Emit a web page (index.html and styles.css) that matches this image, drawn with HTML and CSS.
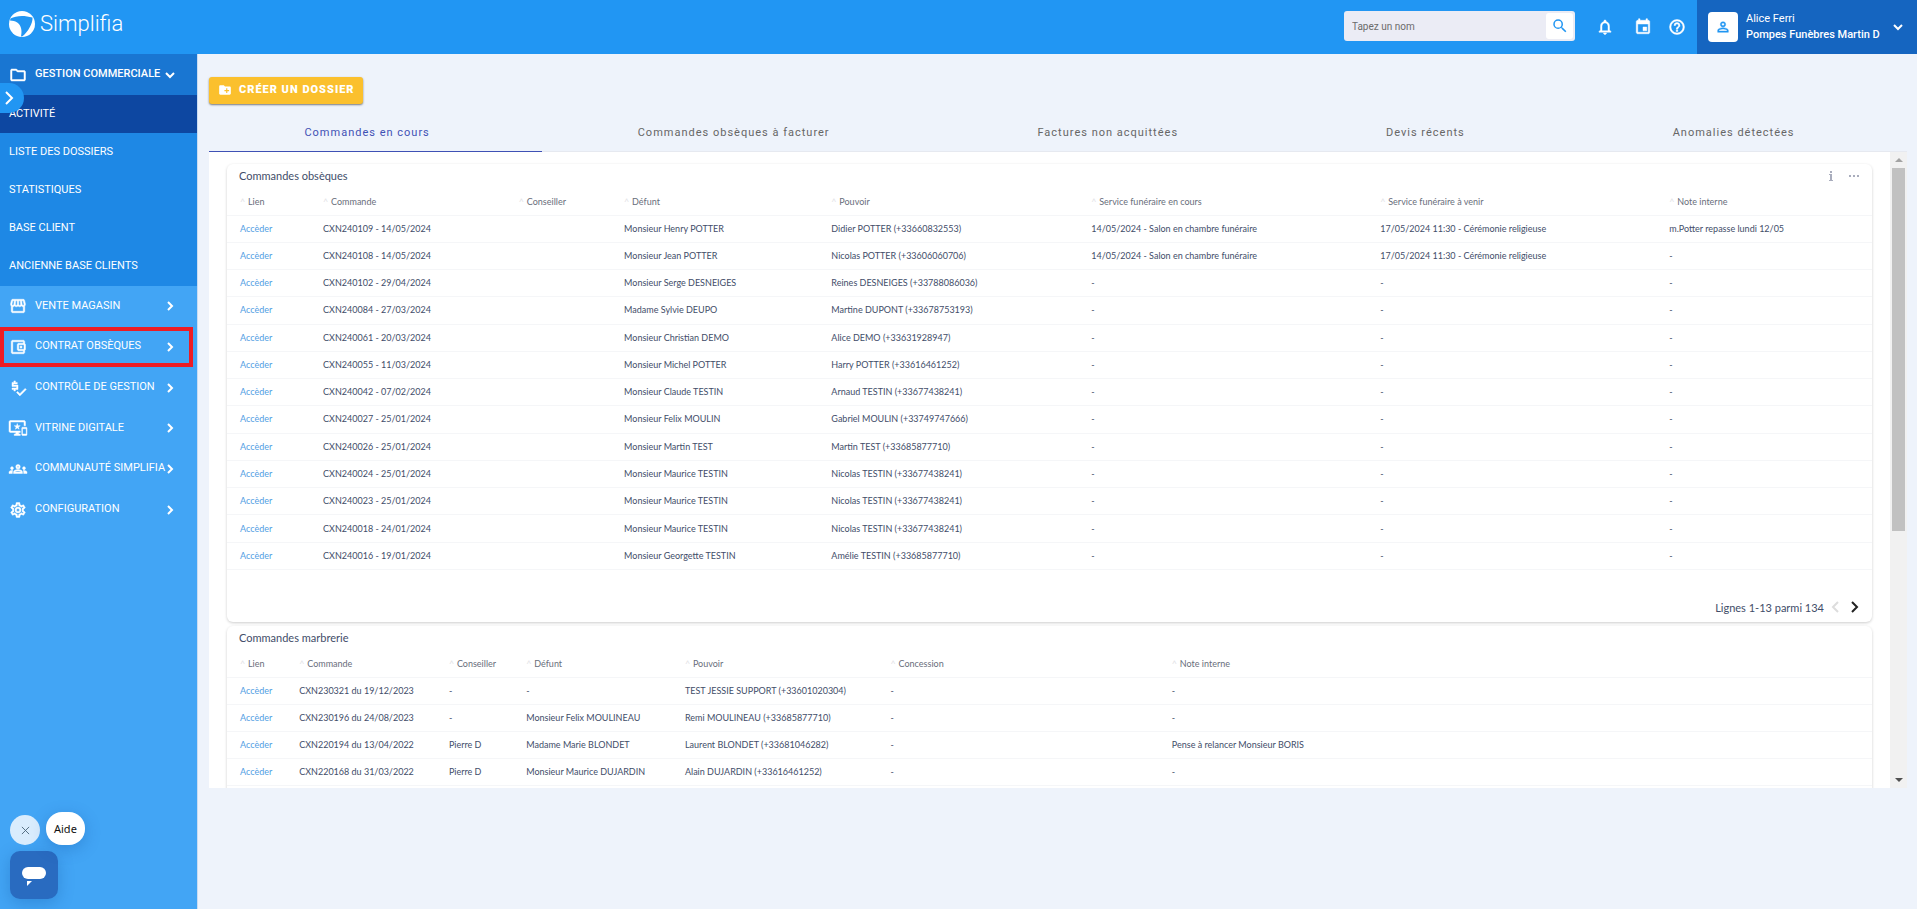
FILE: index.html
```html
<!DOCTYPE html>
<html lang="fr">
<head>
<meta charset="utf-8">
<title>Simplifia</title>
<link rel="stylesheet" href="styles.css">
</head>
<body>
<header class="topbar">
  <a class="brand" href="#">
    <svg class="brand-mark" viewBox="0 0 26 26" aria-hidden="true"><circle cx="13" cy="13" r="13" fill="#fff"/><path d="M1.500 7.500C7 4.500 15 4 23.500 6.500C24 12 19 21 13.500 25.200L12 25.500C13.500 19 12.500 10 1 9.500z" fill="#2196f3"/></svg>
    <span class="brand-name">Simplifia</span>
  </a>
  <form class="search">
    <input class="search-input" type="text" placeholder="Tapez un nom" aria-label="Tapez un nom">
    <button class="search-button" type="button" aria-label="Rechercher"><svg viewBox="0 0 24 24"><path d="M15.500 14h-.79l-.28-.27A6.471 6.471 0 0 0 16 9.500 6.500 6.500 0 1 0 9.500 16c1.610 0 3.090-.59 4.230-1.570l.27.28v.79l5 4.990L20.490 19zm-6 0a4.500 4.500 0 1 1 0-9 4.500 4.500 0 0 1 0 9z"/></svg></button>
  </form>
  <nav class="tools" aria-label="Outils">
    <button type="button" aria-label="Notifications"><svg viewBox="0 0 24 24"><path d="M12 22c1.100 0 2-.9 2-2h-4c0 1.100.9 2 2 2zm6-6v-5c0-3.070-1.630-5.640-4.500-6.320V4c0-.83-.67-1.500-1.500-1.500s-1.500.67-1.500 1.500v.68C7.640 5.360 6 7.920 6 11v5l-2 2v1h16v-1l-2-2zm-2 1H8v-6c0-2.480 1.510-4.500 4-4.500s4 2.020 4 4.500v6z"/></svg></button>
    <button type="button" aria-label="Calendrier"><svg viewBox="0 0 24 24"><path d="M17 12h-5v5h5v-5zM16 1v2H8V1H6v2H5c-1.110 0-1.990.9-1.990 2L3 19c0 1.100.89 2 2 2h14c1.100 0 2-.9 2-2V5c0-1.100-.9-2-2-2h-1V1h-2zm3 18H5V8h14v11z"/></svg></button>
    <button type="button" aria-label="Aide en ligne"><svg viewBox="0 0 24 24"><path d="M11 18h2v-2h-2v2zm1-16a10 10 0 1 0 0 20 10 10 0 0 0 0-20zm0 18a8 8 0 1 1 0-16 8 8 0 0 1 0 16zm0-14a4 4 0 0 0-4 4h2c0-1.100.9-2 2-2s2 .9 2 2c0 2-3 1.750-3 5h2c0-2.250 3-2.500 3-5a4 4 0 0 0-4-4z"/></svg></button>
  </nav>
  <button class="account" type="button">
    <span class="avatar"><svg viewBox="0 0 24 24"><path d="M12 5.900a2.100 2.100 0 1 1 0 4.200 2.100 2.100 0 0 1 0-4.200m0 9c2.970 0 6.100 1.460 6.100 2.100v1.100H5.900V17c0-.64 3.130-2.100 6.100-2.100M12 4a4 4 0 1 0 0 8 4 4 0 0 0 0-8zm0 9c-2.670 0-8 1.340-8 4v3h16v-3c0-2.660-5.330-4-8-4z"/></svg></span>
    <span class="account-text"><span>Alice Ferri</span><strong>Pompes Funèbres Martin D</strong></span>
    <svg class="chevron" viewBox="0 0 12 12"><path d="M2 4l4 4 4-4"/></svg>
  </button>
</header>

<div class="shell">
  <aside class="sidebar">
    <nav aria-label="Menu principal">
      <a class="group open" href="#"><svg class="icon" viewBox="0 0 24 24"><path d="M9.170 6l2 2H20v10H4V6h5.170M10 4H4c-1.100 0-1.990.9-1.990 2L2 18c0 1.100.9 2 2 2h16c1.100 0 2-.9 2-2V8c0-1.100-.9-2-2-2h-8l-2-2z"/></svg><span>GESTION COMMERCIALE</span><svg class="chevron" viewBox="0 0 12 12"><path d="M2 4l4 4 4-4"/></svg></a>
      <div class="submenu">
        <a class="current" href="#">ACTIVITÉ</a>
        <a href="#">LISTE DES DOSSIERS</a>
        <a href="#">STATISTIQUES</a>
        <a href="#">BASE CLIENT</a>
        <a href="#">ANCIENNE BASE CLIENTS</a>
      </div>
      <div class="groups">
        <a class="group" href="#"><svg class="icon" viewBox="0 0 24 24"><path d="M21.900 8.890l-1.050-4.370c-.22-.9-1-1.520-1.910-1.520H5.050c-.9 0-1.690.63-1.900 1.520L2.100 8.890c-.24 1.020-.02 2.060.62 2.880.08.11.19.19.28.29V19c0 1.100.9 2 2 2h14c1.100 0 2-.9 2-2v-6.940c.09-.09.2-.18.28-.28.64-.82.87-1.870.62-2.890zM18.910 4.990l1.050 4.370c.1.420.01.84-.25 1.170-.14.18-.44.47-.94.47-.61 0-1.140-.49-1.210-1.140L16.980 5l1.930-.01zM13 5h1.960l.54 4.520c.05.39-.07.78-.33 1.070-.22.26-.54.41-.95.410-.67 0-1.220-.59-1.220-1.310V5zM8.490 9.520L9.040 5H11v4.690c0 .72-.55 1.310-1.290 1.310-.34 0-.65-.15-.89-.41-.25-.29-.37-.68-.33-1.070zm-4.450-.16L5.050 5h1.970l-.58 4.860c-.08.65-.6 1.140-1.210 1.140-.49 0-.8-.29-.93-.47-.27-.32-.36-.75-.26-1.170zM5 19v-6.030c.08.010.15.030.23.030.87 0 1.660-.36 2.240-.95.6.6 1.400.95 2.310.95.87 0 1.650-.36 2.230-.93.590.57 1.390.93 2.290.93.84 0 1.640-.35 2.240-.95.58.59 1.370.95 2.240.95.08 0 .15-.02.23-.03V19H5z"/></svg><span>VENTE MAGASIN</span><svg class="chevron" viewBox="0 0 12 12"><path d="M4 2l4 4-4 4"/></svg></a>
        <a class="group marked" href="#"><svg class="icon" viewBox="0 0 24 24"><path d="M21 7.280V5c0-1.100-.9-2-2-2H5c-1.110 0-2 .9-2 2v14c0 1.100.89 2 2 2h14c1.100 0 2-.9 2-2v-2.280c.59-.35 1-.98 1-1.720V9c0-.74-.41-1.380-1-1.720zM20 9v6h-7V9h7zM5 19V5h14v2h-6c-1.100 0-2 .9-2 2v6c0 1.100.9 2 2 2h6v2H5z"/><circle cx="16" cy="12" r="1.500"/></svg><span>CONTRAT OBSÈQUES</span><svg class="chevron" viewBox="0 0 12 12"><path d="M4 2l4 4-4 4"/></svg></a>
        <a class="group" href="#"><svg class="icon" viewBox="0 0 24 24"><path d="M11 4.500H8.500V2.500h-2v2H4v5.500h6v2H4v2h2.500v2h2v-2H12V8H6V6.500h5zM21.500 12.500L14.500 19.500 11.500 16.500 10 18l4.500 4.500 8.500-8.500z"/></svg><span>CONTRÔLE DE GESTION</span><svg class="chevron" viewBox="0 0 12 12"><path d="M4 2l4 4-4 4"/></svg></a>
        <a class="group" href="#"><svg class="icon" viewBox="0 0 24 24"><path d="M23 11.010L18 11c-.55 0-1 .45-1 1v9c0 .55.45 1 1 1h5c.55 0 1-.45 1-1v-9c0-.55-.45-.99-1-.99zM23 20h-5v-7h5v7zM20 2H2C.89 2 0 2.890 0 4v12c0 1.100.89 2 2 2h7v2H7v2h8v-2h-2v-2h2v-2H2V4h18v5h2V4c0-1.110-.9-2-2-2zm-8.030 7L11 6l-.97 3H7l2.470 1.760-.94 2.910 2.470-1.800 2.470 1.800-.94-2.910L15 9h-3.030z"/></svg><span>VITRINE DIGITALE</span><svg class="chevron" viewBox="0 0 12 12"><path d="M4 2l4 4-4 4"/></svg></a>
        <a class="group" href="#"><svg class="icon" viewBox="0 0 24 24"><path d="M4 13c1.100 0 2-.9 2-2s-.9-2-2-2-2 .9-2 2 .9 2 2 2zm1.130 1.100c-.37-.06-.74-.1-1.130-.1-.99 0-1.930.21-2.780.58A2.010 2.010 0 0 0 0 16.430V18h4.500v-1.610c0-.83.23-1.610.63-2.290zM20 13c1.100 0 2-.9 2-2s-.9-2-2-2-2 .9-2 2 .9 2 2 2zm4 3.430c0-.81-.48-1.530-1.220-1.850A6.950 6.950 0 0 0 20 14c-.39 0-.76.04-1.130.1.4.68.63 1.460.63 2.290V18H24v-1.570zm-7.760-2.780A10.400 10.400 0 0 0 12 12.750c-1.630 0-3.070.39-4.240.9A2.990 2.990 0 0 0 6 16.390V18h12v-1.610c0-1.180-.68-2.260-1.760-2.740zM8.070 16c.09-.23.13-.39.91-.69.97-.38 1.990-.56 3.020-.56s2.050.18 3.020.56c.77.3.81.46.91.69H8.070zM12 8c.55 0 1 .45 1 1s-.45 1-1 1-1-.45-1-1 .45-1 1-1m0-2a3 3 0 1 0 0 6 3 3 0 0 0 0-6z"/></svg><span>COMMUNAUTÉ SIMPLIFIA</span><svg class="chevron" viewBox="0 0 12 12"><path d="M4 2l4 4-4 4"/></svg></a>
        <a class="group" href="#"><svg class="icon" viewBox="0 0 24 24"><path d="M19.430 12.980c.04-.32.07-.64.07-.98s-.03-.66-.07-.98l2.110-1.650c.19-.15.24-.42.12-.64l-2-3.460a.5.5 0 0 0-.61-.22l-2.490 1c-.52-.4-1.080-.73-1.690-.98l-.38-2.650A.49.49 0 0 0 14 2h-4a.49.49 0 0 0-.49.420l-.38 2.650c-.61.25-1.170.59-1.690.98l-2.490-1a.5.5 0 0 0-.61.220l-2 3.460c-.13.22-.07.49.12.64l2.110 1.650c-.04.32-.07.65-.07.98s.03.66.07.98l-2.110 1.650c-.19.15-.24.42-.12.64l2 3.460c.12.22.39.3.61.22l2.490-1c.52.4 1.080.73 1.690.98l.38 2.650c.03.24.24.42.49.42h4c.25 0 .46-.18.49-.42l.38-2.650c.61-.25 1.170-.59 1.690-.98l2.490 1c.23.09.49 0 .61-.22l2-3.460a.5.5 0 0 0-.12-.64l-2.110-1.650zm-1.980-1.710c.04.31.05.52.05.73s-.02.43-.05.73l-.14 1.130.89.7 1.080.84-.7 1.210-1.270-.51-1.040-.42-.9.680c-.43.32-.84.56-1.250.73l-1.060.43-.16 1.130-.2 1.350h-1.400l-.19-1.350-.16-1.130-1.060-.43a5.670 5.670 0 0 1-1.230-.71l-.91-.7-1.060.43-1.270.51-.7-1.210 1.080-.84.89-.7-.14-1.130A7.200 7.200 0 0 1 6.500 12c0-.2.020-.43.050-.73l.14-1.130-.89-.7-1.080-.84.7-1.210 1.270.51 1.040.42.9-.68c.43-.32.84-.56 1.250-.73l1.060-.43.16-1.130.2-1.350h1.390l.19 1.350.16 1.130 1.060.43c.43.18.83.41 1.230.71l.91.7 1.060-.43 1.270-.51.7 1.210-1.070.85-.89.7.14 1.130zM12 8a4 4 0 1 0 0 8 4 4 0 0 0 0-8zm0 6a2 2 0 1 1 0-4 2 2 0 0 1 0 4z"/></svg><span>CONFIGURATION</span><svg class="chevron" viewBox="0 0 12 12"><path d="M4 2l4 4-4 4"/></svg></a>
      </div>
    </nav>
    <button class="expander" type="button" aria-label="Déplier le menu"><svg class="chevron" viewBox="0 0 12 16"><path d="M3 2l6 6-6 6"/></svg></button>
    <div class="help">
      <div class="help-row">
        <button class="help-close" type="button" aria-label="Fermer"><svg viewBox="0 0 10 10"><path d="M1 1l8 8M9 1L1 9"/></svg></button>
        <button class="help-label" type="button">Aide</button>
      </div>
      <button class="help-chat" type="button" aria-label="Ouvrir le chat"><svg viewBox="0 0 26 20"><rect x="1" y="0" width="24" height="12" rx="6"/><path d="M6 14h5l-5 5z"/></svg></button>
    </div>
  </aside>

  <main class="content">
    <button class="create" type="button"><svg viewBox="0 0 24 24"><path d="M20 6h-8l-2-2H4c-1.110 0-1.990.89-1.990 2L2 18c0 1.110.89 2 2 2h16c1.110 0 2-.89 2-2V8c0-1.110-.89-2-2-2zm-1 8h-3v3h-2v-3h-3v-2h3V9h2v3h3v2z"/></svg>CRÉER UN DOSSIER</button>
    <div class="tabs" role="tablist">
      <button class="tab selected" role="tab" aria-selected="true" type="button">Commandes en cours</button>
      <button class="tab" role="tab" type="button">Commandes obsèques à facturer</button>
      <button class="tab" role="tab" type="button">Factures non acquittées</button>
      <button class="tab" role="tab" type="button">Devis récents</button>
      <button class="tab" role="tab" type="button">Anomalies détectées</button>
    </div>
    <div class="panel">
      <div class="cards">
        <section class="card">
          <div class="card-head"><h2>Commandes obsèques</h2>
            <div class="card-tools"><button type="button" aria-label="Informations"><svg viewBox="0 0 10 10"><path d="M4 0h2v2H4zM3 3h3v6h1v1H3V9h1V4H3z"/></svg></button><button type="button" aria-label="Plus"><svg viewBox="0 0 10 10"><path d="M0 4h2v2H0zM4 4h2v2H4zM8 4h2v2H8z"/></svg></button></div>
          </div>
          <table class="orders funeral">
            <thead><tr><th>Lien</th><th>Commande</th><th>Conseiller</th><th>Défunt</th><th>Pouvoir</th><th>Service funéraire en cours</th><th>Service funéraire à venir</th><th>Note interne</th></tr></thead>
            <tbody>
              <tr><td><a href="#">Accèder</a></td><td>CXN240109 - 14/05/2024</td><td></td><td>Monsieur Henry POTTER</td><td>Didier POTTER (+33660832553)</td><td>14/05/2024 - Salon en chambre funéraire</td><td>17/05/2024 11:30 - Cérémonie religieuse</td><td>m.Potter repasse lundi 12/05</td></tr>
              <tr><td><a href="#">Accèder</a></td><td>CXN240108 - 14/05/2024</td><td></td><td>Monsieur Jean POTTER</td><td>Nicolas POTTER (+33606060706)</td><td>14/05/2024 - Salon en chambre funéraire</td><td>17/05/2024 11:30 - Cérémonie religieuse</td><td>-</td></tr>
              <tr><td><a href="#">Accèder</a></td><td>CXN240102 - 29/04/2024</td><td></td><td>Monsieur Serge DESNEIGES</td><td>Reines DESNEIGES (+33788086036)</td><td>-</td><td>-</td><td>-</td></tr>
              <tr><td><a href="#">Accèder</a></td><td>CXN240084 - 27/03/2024</td><td></td><td>Madame Sylvie DEUPO</td><td>Martine DUPONT (+33678753193)</td><td>-</td><td>-</td><td>-</td></tr>
              <tr><td><a href="#">Accèder</a></td><td>CXN240061 - 20/03/2024</td><td></td><td>Monsieur Christian DEMO</td><td>Alice DEMO (+33631928947)</td><td>-</td><td>-</td><td>-</td></tr>
              <tr><td><a href="#">Accèder</a></td><td>CXN240055 - 11/03/2024</td><td></td><td>Monsieur Michel POTTER</td><td>Harry POTTER (+33616461252)</td><td>-</td><td>-</td><td>-</td></tr>
              <tr><td><a href="#">Accèder</a></td><td>CXN240042 - 07/02/2024</td><td></td><td>Monsieur Claude TESTIN</td><td>Arnaud TESTIN (+33677438241)</td><td>-</td><td>-</td><td>-</td></tr>
              <tr><td><a href="#">Accèder</a></td><td>CXN240027 - 25/01/2024</td><td></td><td>Monsieur Felix MOULIN</td><td>Gabriel MOULIN (+33749747666)</td><td>-</td><td>-</td><td>-</td></tr>
              <tr><td><a href="#">Accèder</a></td><td>CXN240026 - 25/01/2024</td><td></td><td>Monsieur Martin TEST</td><td>Martin TEST (+33685877710)</td><td>-</td><td>-</td><td>-</td></tr>
              <tr><td><a href="#">Accèder</a></td><td>CXN240024 - 25/01/2024</td><td></td><td>Monsieur Maurice TESTIN</td><td>Nicolas TESTIN (+33677438241)</td><td>-</td><td>-</td><td>-</td></tr>
              <tr><td><a href="#">Accèder</a></td><td>CXN240023 - 25/01/2024</td><td></td><td>Monsieur Maurice TESTIN</td><td>Nicolas TESTIN (+33677438241)</td><td>-</td><td>-</td><td>-</td></tr>
              <tr><td><a href="#">Accèder</a></td><td>CXN240018 - 24/01/2024</td><td></td><td>Monsieur Maurice TESTIN</td><td>Nicolas TESTIN (+33677438241)</td><td>-</td><td>-</td><td>-</td></tr>
              <tr><td><a href="#">Accèder</a></td><td>CXN240016 - 19/01/2024</td><td></td><td>Monsieur Georgette TESTIN</td><td>Amélie TESTIN (+33685877710)</td><td>-</td><td>-</td><td>-</td></tr>
            </tbody>
          </table>
          <div class="pager"><span>Lignes 1-13 parmi 134</span><button type="button" aria-label="Page précédente" disabled><svg class="chevron" viewBox="0 0 12 12"><path d="M8 1L3 6l5 5"/></svg></button><button type="button" aria-label="Page suivante"><svg class="chevron" viewBox="0 0 12 12"><path d="M4 1l5 5-5 5"/></svg></button></div>
        </section>
        <section class="card">
          <div class="card-head"><h2>Commandes marbrerie</h2></div>
          <table class="orders marble">
            <thead><tr><th>Lien</th><th>Commande</th><th>Conseiller</th><th>Défunt</th><th>Pouvoir</th><th>Concession</th><th>Note interne</th></tr></thead>
            <tbody>
              <tr><td><a href="#">Accèder</a></td><td>CXN230321 du 19/12/2023</td><td>-</td><td>-</td><td>TEST JESSIE SUPPORT (+33601020304)</td><td>-</td><td>-</td></tr>
              <tr><td><a href="#">Accèder</a></td><td>CXN230196 du 24/08/2023</td><td>-</td><td>Monsieur Felix MOULINEAU</td><td>Remi MOULINEAU (+33685877710)</td><td>-</td><td>-</td></tr>
              <tr><td><a href="#">Accèder</a></td><td>CXN220194 du 13/04/2022</td><td>Pierre D</td><td>Madame Marie BLONDET</td><td>Laurent BLONDET (+33681046282)</td><td>-</td><td>Pense à relancer Monsieur BORIS</td></tr>
              <tr><td><a href="#">Accèder</a></td><td>CXN220168 du 31/03/2022</td><td>Pierre D</td><td>Monsieur Maurice DUJARDIN</td><td>Alain DUJARDIN (+33616461252)</td><td>-</td><td>-</td></tr>
            </tbody>
          </table>
          <div class="pager"></div>
        </section>
      </div>
      <div class="scrollbar" aria-hidden="true"><span class="arrow up"></span><span class="thumb"></span><span class="rest"></span><span class="arrow down"></span></div>
    </div>
  </main>
</div>
</body>
</html>
```
FILE: styles.css
```css
* { box-sizing: border-box; }
body {
  margin: 0;
  min-height: 100vh;
  display: flex;
  flex-direction: column;
  background: #eef3fb;
  font-family: Roboto, "Liberation Sans", sans-serif;
  font-size: 12px;
  color: #424d69;
}
button { font: inherit; color: inherit; background: none; border: 0; padding: 0; cursor: pointer; }
a { color: inherit; text-decoration: none; }
svg { display: block; flex: none; fill: currentColor; }
.chevron { width: 12px; height: 12px; fill: none; stroke: currentColor; stroke-width: 2; }

/* Top bar */
.topbar { display: flex; align-items: stretch; height: 54px; background: #2196f3; color: #fff; }
.brand { display: flex; align-items: center; gap: 5px; padding: 0 0 6px 9px; margin-right: auto; }
.brand-mark { width: 26px; height: 26px; }
.brand-name { font-size: 22px; font-weight: 300; line-height: 26px; }
.search { display: flex; align-self: flex-start; width: 231px; height: 30px; margin-top: 11px; padding: 2px; border-radius: 3px; background: #ebecf5; }
.search-input { flex: 1; min-width: 0; border: 0; padding: 0 6px; background: none; outline: 0; font: 10px Roboto, sans-serif; color: #555; }
.search-input::placeholder { color: #6b6b6b; }
.search-button { display: grid; place-items: center; width: 27px; border-radius: 3px; background: #fff; color: #2196f3; }
.search-button svg { width: 18px; height: 18px; }
.tools { display: flex; align-items: center; gap: 16px; padding: 0 11px 0 21px; }
.tools svg { width: 18px; height: 18px; stroke: currentColor; stroke-width: .6; overflow: visible; }
.tools button:nth-child(2) { margin-left: 4px; }
.account { display: flex; align-items: center; gap: 8px; width: 220px; padding: 0 13px 0 11px; background: #1565c0; text-align: left; }
.avatar { display: grid; place-items: center; width: 30px; height: 30px; border-radius: 4px; background: #fff; color: #2196f3; }
.avatar svg { width: 16px; height: 16px; stroke: currentColor; stroke-width: .6; }
.account-text { display: flex; flex-direction: column; flex: 1; font-size: 11px; line-height: 16px; white-space: nowrap; }
.account-text strong { font-weight: 500; }

/* Sidebar */
.shell { display: flex; flex: 1; }
.sidebar { position: relative; flex: none; width: 198px; background: #42a5f5; border-right: 1px solid #c9dcf2; color: #fff; font-size: 11px; font-weight: 400; }
.group { display: flex; align-items: center; padding: 0 21px 0 9px; }
.group span { flex: 1; min-width: 0; padding: 0 0 2px 8px; white-space: nowrap; }
.group.open { height: 41px; background: #1976d2; font-weight: 500; }
.icon { width: 18px; height: 18px; stroke: currentColor; stroke-width: .6; overflow: visible; }
.submenu { display: flex; flex-direction: column; padding-bottom: 1px; background: #1e88e5; }
.submenu a { line-height: 38px; padding: 0 9px; }
.submenu .current { background: #0d47a1; }
.groups { display: grid; grid-template-columns: minmax(0, 1fr); grid-template-rows: repeat(6, 1fr); height: 244px; }
.marked { outline: 4px solid #ed1c24; outline-offset: -4px; margin-right: 4px; padding-right: 17px; }
.expander { position: absolute; left: 0; top: 29px; width: 24px; height: 30px; padding-left: 3px; border-radius: 0 15px 15px 0; background: #2196f3; }
.expander .chevron { height: 16px; }
.help { position: absolute; left: 10px; bottom: 10px; color: #111; }
.help-row { display: flex; align-items: flex-end; gap: 6px; margin-bottom: 6px; }
.help-close { display: grid; place-items: center; width: 30px; height: 30px; border-radius: 50%; background: #d9ecfd; color: #4a6478; }
.help-close svg { width: 9px; height: 9px; fill: none; stroke: currentColor; }
.help-label { height: 33px; padding: 0 8px; border-radius: 16px; background: #fff; font: 11px "Noto Sans", sans-serif; box-shadow: 0 4px 16px rgba(0, 60, 140, .25); }
.help-chat { display: grid; place-items: center; width: 48px; height: 48px; padding-top: 4px; border-radius: 10px; background: #296bc0; color: #fff; box-shadow: 0 4px 16px rgba(0, 60, 140, .25); }
.help-chat svg { width: 26px; height: 20px; }

/* Content */
.content { flex: 1; min-width: 0; padding: 23px 10px 0 11px; }
.create { display: flex; align-items: center; gap: 7px; height: 27px; padding: 0 8px 2px 9px; border-radius: 3px; background: #fbc02d; color: #fff; font-size: 11px; font-weight: 900; letter-spacing: 1px; box-shadow: 0 1px 2px rgba(0, 0, 0, .5); }
.create svg { width: 14px; height: 14px; }
.tabs { display: flex; margin-top: 8px; }
.tab { flex: 1 1 auto; height: 40px; padding: 2px 17px 0 0; border-bottom: 1px solid #e6e9f0; color: #666; font-size: 11px; letter-spacing: 1px; }
.selected { border-bottom-color: #3f51b5; color: #3f51b5; }
.panel { display: flex; height: 70vh; overflow: hidden; background: #fff; }
.cards { flex: 1; min-width: 0; padding: 12px 18px 0; overflow: hidden; font-family: Lato, sans-serif; }
.card { margin-bottom: 4px; border-radius: 6px; box-shadow: 0 1px 3px rgba(0, 0, 0, .2); }
.card-head { display: flex; justify-content: space-between; height: 24px; padding: 0 13px 0 12px; }
.card-head h2 { margin: 0; font-size: 11px; font-weight: 400; line-height: 24px; }
.card-tools { display: flex; gap: 13px; color: #a9adbd; }
.card-tools svg { width: 10px; height: 10px; }
.orders { width: 100%; table-layout: fixed; border-collapse: collapse; font-size: 9px; line-height: 12px; }
.orders th, .orders td { height: 27px; padding: 0 0 0 13px; border-bottom: 1px solid #f5f6f8; text-align: left; font-weight: 400; white-space: nowrap; }
.orders th { padding-top: 2px; color: #696e7b; }
.orders th::before { content: "^"; display: inline-block; width: 8px; color: #e2e2e6; }
.orders a { color: #509ee3; }
.funeral { height: 382px; }
.funeral th:nth-child(1) { width: 5.05%; }
.funeral th:nth-child(2) { width: 11.9%; }
.funeral th:nth-child(3) { width: 6.4%; }
.funeral th:nth-child(4) { width: 12.6%; }
.funeral th:nth-child(5) { width: 15.8%; }
.funeral th:nth-child(6), .funeral th:nth-child(7) { width: 17.57%; }
.marble th:nth-child(1) { width: 3.6%; }
.marble th:nth-child(2) { width: 9.1%; }
.marble th:nth-child(3) { width: 4.7%; }
.marble th:nth-child(4) { width: 9.65%; }
.marble th:nth-child(5) { width: 12.5%; }
.marble th:nth-child(6) { width: 17.1%; }
.pager { display: flex; justify-content: flex-end; align-items: center; gap: 6px; height: 52px; padding: 22px 12px 0; font-size: 11px; }
.pager .chevron { color: #222; }
.pager :disabled .chevron { color: #ddd; }
.scrollbar { display: flex; flex-direction: column; align-items: center; width: 17px; background: #f1f1f1; }
.arrow { display: grid; place-items: center; height: 16px; }
.arrow::before { content: ""; border: 4px solid transparent; }
.up::before { border-top: 0; border-bottom-color: #a3a3a3; }
.down::before { border-bottom: 0; border-top-color: #505050; }
.thumb { flex: 3; width: 13px; background: #c1c1c1; }
.rest { flex: 2; }
```
